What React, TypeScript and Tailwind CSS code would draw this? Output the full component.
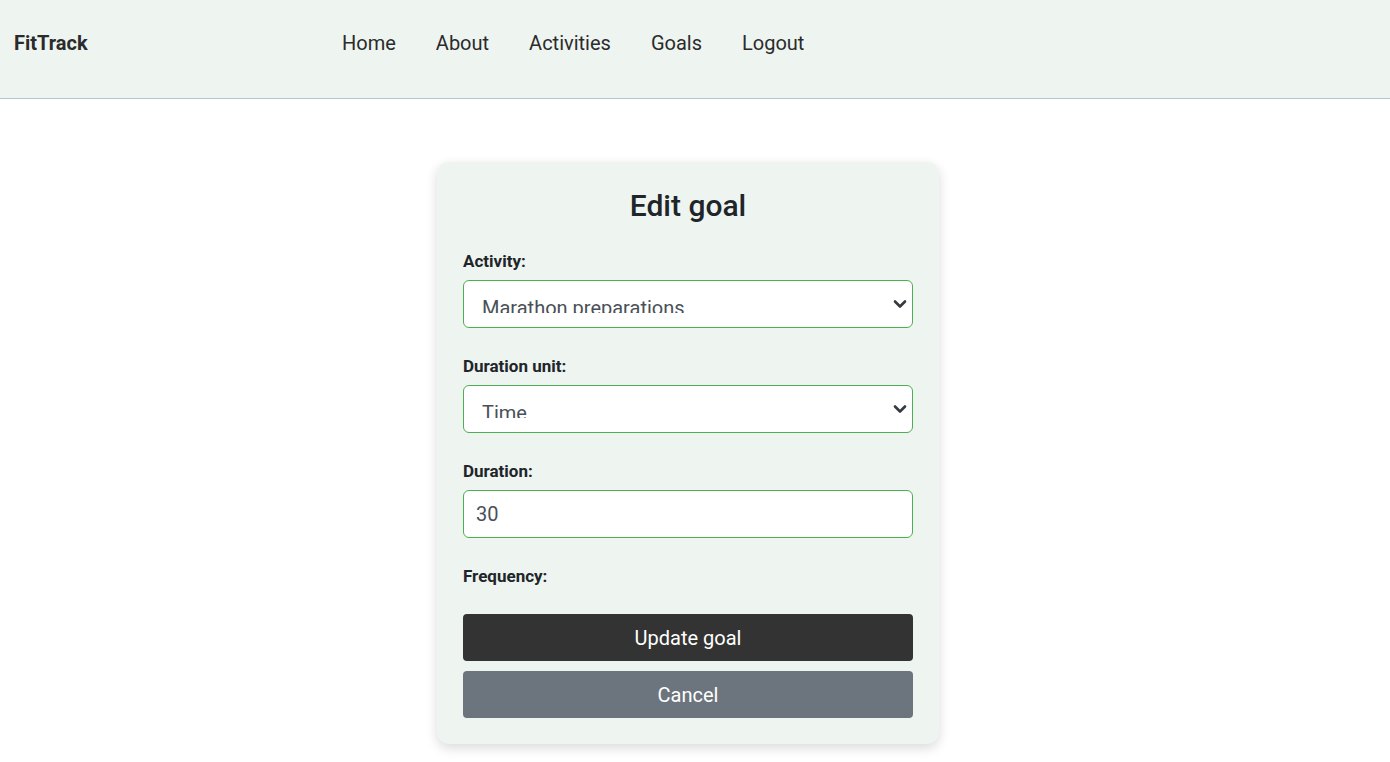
import { useState } from 'react';

const navLinks = ['Home', 'About', 'Activities', 'Goals', 'Logout'];

function Chevron() {
  return (
    <svg viewBox="0 0 16 16" className="pointer-events-none absolute right-[5px] top-[16px] w-[16px] h-[16px]" fill="none" stroke="#343a40" strokeWidth={2.6} strokeLinecap="round" strokeLinejoin="round">
      <path d="M3 5.5l5 5 5-5" />
    </svg>
  );
}

export default function App() {
  const [activity, setActivity] = useState('marathon');
  const [unit, setUnit] = useState('time');
  const [duration, setDuration] = useState('30');

  return (
    <div className="min-h-screen bg-white text-[#212529]" style={{ fontFamily: 'Roboto, "Liberation Sans", sans-serif' }}>
      {/* Navbar */}
      <header className="h-[99px] bg-[#eef5f1] border-b border-[#b3c6cf] flex items-center px-[14px] pb-[12px]">
        <span className="text-[20px] font-bold text-[#2b2b2b] w-[328px]">FitTrack</span>
        <nav className="flex items-center gap-[40px]">
          {navLinks.map((l) => (
            <a key={l} href="#" className="text-[20px] text-[#2b2b2b]">{l}</a>
          ))}
        </nav>
      </header>

      <main className="flex justify-center pt-[63px] pr-[14px]">
        <form
          className="w-[502px] bg-[#eef5f1] rounded-[12px] px-[26px] pt-[26px] pb-[26px] shadow-[0_4px_12px_rgba(0,0,0,0.15)]"
          onSubmit={(e) => e.preventDefault()}
        >
          <h2 className="text-[30px] leading-[36px] font-medium text-center text-[#212529] mb-[27px]">Edit goal</h2>

          <label className="block text-[17px] leading-[20px] font-bold mb-[9px]">Activity:</label>
          <div className="relative mb-[28px]">
            <select
              value={activity}
              onChange={(e) => setActivity(e.target.value)}
              className="appearance-none w-full h-[48px] bg-white border border-[#4caf50] rounded-[6px] pl-[18px] pr-[30px] pt-[12px] pb-[14px] text-[20px] leading-normal text-[#495057] outline-none"
            >
              <option value="marathon">Marathon preparations</option>
              <option value="cycling">Cycling</option>
            </select>
            <Chevron />
          </div>

          <label className="block text-[17px] leading-[20px] font-bold mb-[9px]">Duration unit:</label>
          <div className="relative mb-[28px]">
            <select
              value={unit}
              onChange={(e) => setUnit(e.target.value)}
              className="appearance-none w-full h-[48px] bg-white border border-[#4caf50] rounded-[6px] pl-[18px] pr-[30px] pt-[12px] pb-[14px] text-[20px] leading-normal text-[#495057] outline-none"
            >
              <option value="time">Time</option>
              <option value="distance">Distance</option>
            </select>
            <Chevron />
          </div>

          <label className="block text-[17px] leading-[20px] font-bold mb-[9px]">Duration:</label>
          <input
            value={duration}
            onChange={(e) => setDuration(e.target.value)}
            className="block w-full h-[48px] bg-white border border-[#4caf50] rounded-[6px] px-[12px] text-[20px] text-[#495057] outline-none mb-[28px]"
          />

          <label className="block text-[17px] leading-[20px] font-bold mb-[28px]">Frequency:</label>

          <button type="submit" className="block w-full h-[47px] bg-[#333333] text-white text-[20px] rounded-[4px] mb-[10px]">
            Update goal
          </button>
          <button type="button" className="block w-full h-[47px] bg-[#6c757d] text-white text-[20px] rounded-[4px]">
            Cancel
          </button>
        </form>
      </main>
    </div>
  );
}
